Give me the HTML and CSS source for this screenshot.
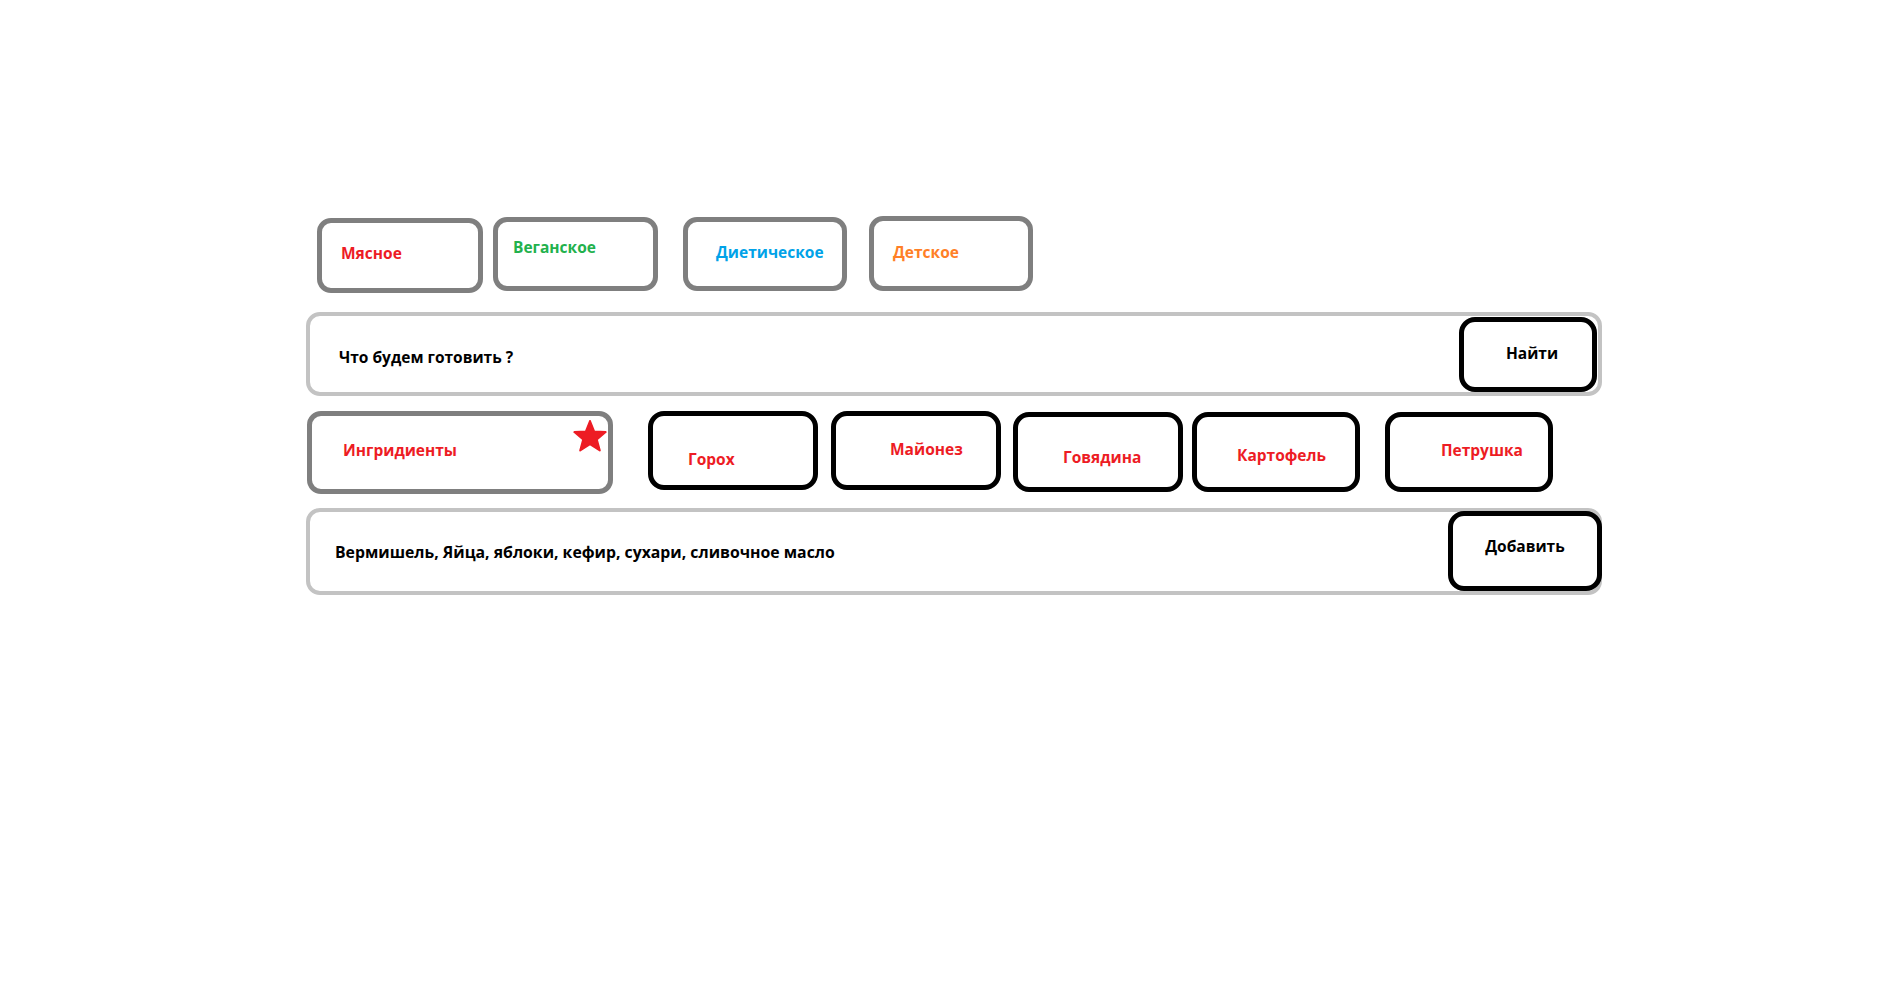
FILE: index.html
```html
<!DOCTYPE html>
<html lang="ru">
<head>
<meta charset="utf-8">
<title>Что будем готовить</title>
<link rel="stylesheet" href="styles.css">
</head>
<body>
<div class="page">
  <div class="cats">
    <div class="cat meat">Мясное</div>
    <div class="cat vegan">Веганское</div>
    <div class="cat diet">Диетическое</div>
    <div class="cat kids">Детское</div>
  </div>

  <div class="bar search">
    <span class="bar-text search-text">Что будем готовить ?</span>
    <div class="btn find">Найти</div>
  </div>

  <div class="ings">
    <div class="ing-main">
      <span>Ингридиенты</span>
      <svg class="star" viewBox="0 0 34 34" width="34" height="34">
        <polygon points="17,1 21.2,11.6 32.6,12.1 23.8,19.4 26.8,30.5 17,24.2 7.2,30.5 10.2,19.4 1.4,12.1 12.8,11.6" fill="#ed1c24" stroke="#ed1c24" stroke-width="2" stroke-linejoin="round"/>
      </svg>
    </div>
    <div class="chip peas">Горох</div>
    <div class="chip mayo">Майонез</div>
    <div class="chip beef">Говядина</div>
    <div class="chip potato">Картофель</div>
    <div class="chip parsley">Петрушка</div>
  </div>

  <div class="bar addbar">
    <span class="bar-text add-text">Вермишель, Яйца, яблоки, кефир, сухари, сливочное масло</span>
    <div class="btn add">Добавить</div>
  </div>
</div>
</body>
</html>
```

FILE: styles.css
```css
* { box-sizing: border-box; }

html, body {
  margin: 0;
  padding: 0;
  background: #ffffff;
}

body {
  font-family: "Open Sans", "Liberation Sans", sans-serif;
  font-weight: 700;
  font-size: 15.5px;
  color: #000;
}

.page {
  padding-top: 218px;
  padding-left: 306px;
  width: 1602px;
}

/* ---------- categories ---------- */
.cats {
  display: flex;
  align-items: flex-start;
  margin-left: 11px;
}

.cat {
  display: flex;
  align-items: center;
  height: 75px;
  border: 5px solid #7f7f7f;
  border-radius: 14px;
  white-space: nowrap;
}

.meat {
  width: 166px;
  padding-left: 19px;
  padding-bottom: 6px;
  color: #ed1c24;
}

.vegan {
  width: 165px;
  height: 74px;
  margin-top: -1px;
  margin-left: 10px;
  padding-left: 15px;
  padding-bottom: 14px;
  color: #22b14c;
}

.diet {
  width: 164px;
  height: 74px;
  margin-top: -1px;
  margin-left: 25px;
  padding-left: 28px;
  padding-bottom: 4px;
  color: #00a2e8;
}

.kids {
  width: 164px;
  height: 75px;
  margin-top: -2px;
  margin-left: 22px;
  padding-left: 19px;
  padding-bottom: 3px;
  color: #ff7f27;
}

/* ---------- bars ---------- */
.bar {
  display: flex;
  align-items: center;
  justify-content: space-between;
  width: 1296px;
  border: 4px solid #c3c3c3;
  border-radius: 14px;
}

.bar-text { white-space: nowrap; }

.search {
  margin-top: 19px;
  height: 84px;
  padding-left: 29px;
}

.search-text {
  margin-top: 6px;
  font-size: 15.5px;
}

.btn {
  display: flex;
  align-items: center;
  justify-content: center;
  border: 5px solid #000;
  border-radius: 16px;
  background: #fff;
}

.find {
  width: 138px;
  height: 75px;
  margin-right: 1px;
  padding-left: 8px;
  padding-bottom: 3px;
}

.addbar {
  margin-top: 14px;
  height: 87px;
  padding-left: 25px;
}

.add-text {
  font-size: 15.8px;
}

.add {
  align-self: flex-start;
  width: 154px;
  height: 80px;
  margin-top: -1px;
  margin-right: -4px;
  padding-bottom: 10px;
}

/* ---------- ingredients ---------- */
.ings {
  display: flex;
  align-items: flex-start;
  margin-top: 15px;
}

.ing-main {
  position: relative;
  display: flex;
  align-items: center;
  width: 306px;
  height: 83px;
  margin-left: 1px;
  padding-left: 31px;
  padding-bottom: 5px;
  border: 5px solid #7f7f7f;
  border-radius: 14px;
  color: #ed1c24;
}

.star {
  position: absolute;
  left: 261px;
  top: 4px;
}

.chip {
  display: flex;
  align-items: center;
  height: 79px;
  border: 5px solid #000;
  border-radius: 16px;
  color: #ed1c24;
  white-space: nowrap;
}

.peas {
  width: 170px;
  margin-left: 35px;
  padding-left: 35px;
  padding-top: 17px;
}

.mayo {
  width: 170px;
  margin-left: 13px;
  padding-left: 54px;
  padding-bottom: 3px;
}

.beef {
  width: 170px;
  height: 80px;
  margin-top: 1px;
  margin-left: 12px;
  padding-left: 45px;
  padding-top: 10px;
}

.potato {
  width: 168px;
  height: 80px;
  margin-top: 1px;
  margin-left: 9px;
  padding-left: 40px;
  padding-top: 6px;
}

.parsley {
  width: 168px;
  height: 80px;
  margin-top: 1px;
  margin-left: 25px;
  padding-left: 51px;
  padding-bottom: 4px;
}
```
